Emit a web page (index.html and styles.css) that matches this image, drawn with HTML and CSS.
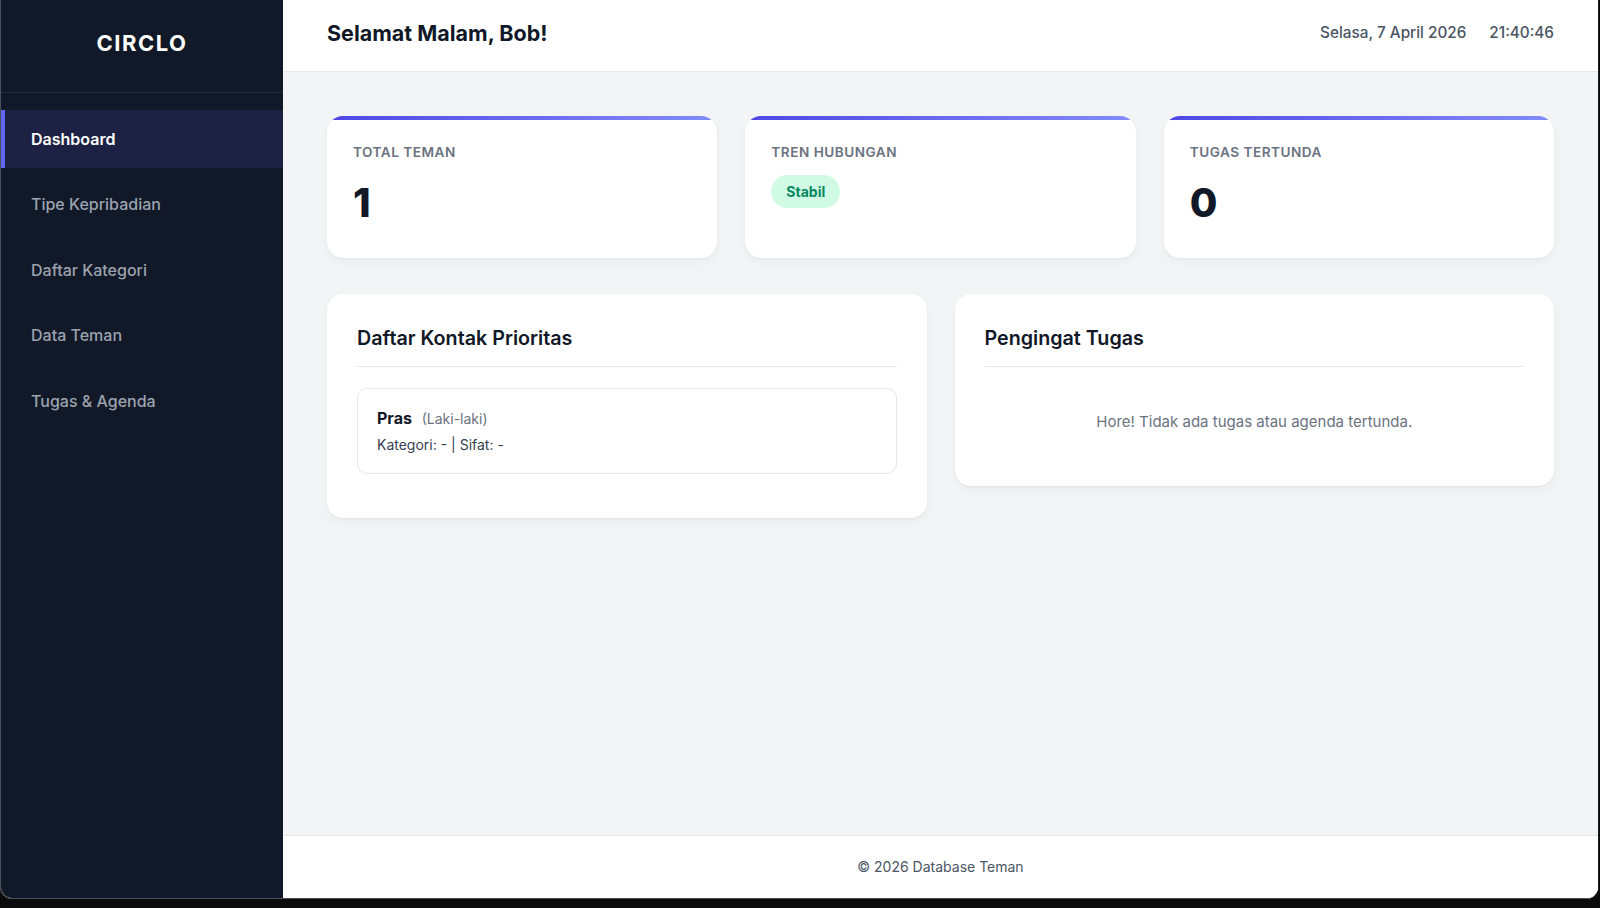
FILE: index.html
```html
<!DOCTYPE html>
<html lang="id">
<head>
<meta charset="utf-8">
<title>Circlo - Dashboard</title>
<link rel="stylesheet" href="styles.css">
</head>
<body>
<div class="window">
  <aside class="sidebar">
    <div class="brand">CIRCLO</div>
    <nav class="nav">
      <a class="nav-item active" href="#">Dashboard</a>
      <a class="nav-item" href="#">Tipe Kepribadian</a>
      <a class="nav-item" href="#">Daftar Kategori</a>
      <a class="nav-item" href="#">Data Teman</a>
      <a class="nav-item" href="#">Tugas &amp; Agenda</a>
    </nav>
  </aside>
  <div class="main">
    <header class="topbar">
      <h1 class="greeting">Selamat Malam, Bob!</h1>
      <div class="clock">
        <span class="date">Selasa, 7 April 2026</span>
        <span class="time">21:40:46</span>
      </div>
    </header>
    <main class="content">
      <section class="stats">
        <div class="stat-card">
          <div class="stat-label">Total Teman</div>
          <div class="stat-value">1</div>
        </div>
        <div class="stat-card">
          <div class="stat-label">Tren Hubungan</div>
          <span class="badge">Stabil</span>
        </div>
        <div class="stat-card">
          <div class="stat-label">Tugas Tertunda</div>
          <div class="stat-value">0</div>
        </div>
      </section>
      <section class="panels">
        <div class="panel">
          <h2 class="panel-title">Daftar Kontak Prioritas</h2>
          <ul class="contact-list">
            <li class="contact">
              <div class="contact-name">Pras <span class="contact-gender">(Laki-laki)</span></div>
              <div class="contact-meta">Kategori: - | Sifat: -</div>
            </li>
          </ul>
        </div>
        <div class="panel">
          <h2 class="panel-title">Pengingat Tugas</h2>
          <p class="empty">Hore! Tidak ada tugas atau agenda tertunda.</p>
        </div>
      </section>
    </main>
    <footer class="footer">© 2026 Database Teman</footer>
  </div>
</div>
</body>
</html>
```

FILE: styles.css
```css
* {
  box-sizing: border-box;
}

html, body {
  margin: 0;
  padding: 0;
}

body {
  width: 1600px;
  height: 908px;
  overflow: hidden;
  background: #0b0b0c;
  font-family: "Inter", "Noto Sans", "Liberation Sans", sans-serif;
  color: #111827;
}

.window {
  width: 1599px;
  height: 899px;
  display: flex;
  border: 1px solid #4b515b;
  border-top: none;
  border-right-color: #1a1a1a;
  border-radius: 0 0 12px 12px;
  overflow: hidden;
  background: #fff;
}

/* Sidebar */
.sidebar {
  width: 282px;
  flex-shrink: 0;
  background: #111827;
  display: flex;
  flex-direction: column;
}

.brand {
  padding: 30px 0 36px;
  line-height: 26px;
  font-size: 22px;
  font-weight: 700;
  letter-spacing: 1.5px;
  color: #ffffff;
  text-align: center;
  border-bottom: 1px solid #1f2937;
}

.nav {
  display: flex;
  flex-direction: column;
  gap: 7px;
  padding-top: 17px;
}

.nav-item {
  display: block;
  padding: 18px 20px 18px 26px;
  border-left: 4px solid transparent;
  font-size: 16px;
  line-height: 22.4px;
  font-weight: 500;
  color: #9ca3af;
  text-decoration: none;
}

.nav-item.active {
  background: #1d2245;
  border-left-color: #6366f1;
  color: #ffffff;
  font-weight: 600;
}

/* Main */
.main {
  flex: 1;
  display: flex;
  flex-direction: column;
  background: #f3f4f6;
  min-width: 0;
}

.topbar {
  display: flex;
  align-items: center;
  justify-content: space-between;
  padding: 20px 44px 25px;
  background: #ffffff;
  border-bottom: 1px solid #e5e7eb;
}

.greeting {
  margin: 0;
  font-size: 21.5px;
  line-height: 26px;
  font-weight: 700;
  color: #111827;
}

.clock {
  display: flex;
  gap: 23px;
  font-size: 15.3px;
  line-height: 26px;
  font-weight: 500;
  color: #4b5563;
}

.content {
  flex: 1;
  padding: 44px 44px;
}

.stats {
  display: grid;
  grid-template-columns: repeat(3, 1fr);
  gap: 28px;
}

.stat-card {
  display: flex;
  flex-direction: column;
  align-items: flex-start;
  background: linear-gradient(90deg, #4f46e5, #818cf8) top / 100% 4px no-repeat, #ffffff;
  border-radius: 16px;
  padding: 28px 26px 31px;
  box-shadow: 0 4px 10px rgba(17, 24, 39, 0.04), 0 1px 2px rgba(17, 24, 39, 0.04);
}

.stat-label {
  font-size: 13.6px;
  line-height: 17px;
  font-weight: 600;
  letter-spacing: 0.5px;
  text-transform: uppercase;
  color: #6b7280;
  margin-bottom: 14px;
}

.stat-value {
  margin-top: 4px;
  font-size: 40px;
  line-height: 48px;
  font-weight: 800;
  color: #111827;
}

.badge {
  display: block;
  padding: 8px 15px;
  border-radius: 999px;
  background: #d1fae5;
  color: #05875f;
  font-size: 14px;
  line-height: 17px;
  font-weight: 700;
}

.panels {
  display: grid;
  grid-template-columns: 1fr 1fr;
  gap: 28px;
  align-items: start;
  margin-top: 36px;
}

.panel {
  background: #ffffff;
  border-radius: 16px;
  padding: 30px;
  box-shadow: 0 4px 10px rgba(17, 24, 39, 0.04), 0 1px 2px rgba(17, 24, 39, 0.04);
}

.panel-title {
  margin: 0;
  font-size: 19.7px;
  line-height: 28px;
  font-weight: 600;
  color: #111827;
  padding-bottom: 14px;
  border-bottom: 1px solid #e5e7eb;
}

.contact-list {
  list-style: none;
  margin: 21px 0 0;
  padding: 0;
}

.contact {
  border: 1px solid #e5e7eb;
  border-radius: 10px;
  padding: 18px 19px;
  margin-bottom: 14px;
}

.contact-name {
  font-size: 16px;
  line-height: 22px;
  font-weight: 700;
  color: #111827;
}

.contact-gender {
  margin-left: 6px;
  font-size: 14px;
  font-weight: 400;
  color: #6b7280;
}

.contact-meta {
  margin-top: 5px;
  font-size: 14px;
  line-height: 20px;
  color: #374151;
}

.empty {
  margin: 21px 0 0;
  padding: 22px 0;
  text-align: center;
  font-size: 15px;
  line-height: 24px;
  color: #6b7280;
}

.footer {
  padding: 21px 0;
  line-height: 20px;
  font-size: 14px;
  text-align: center;
  color: #4b5563;
  background: #ffffff;
  border-top: 1px solid #e5e7eb;
}
```
